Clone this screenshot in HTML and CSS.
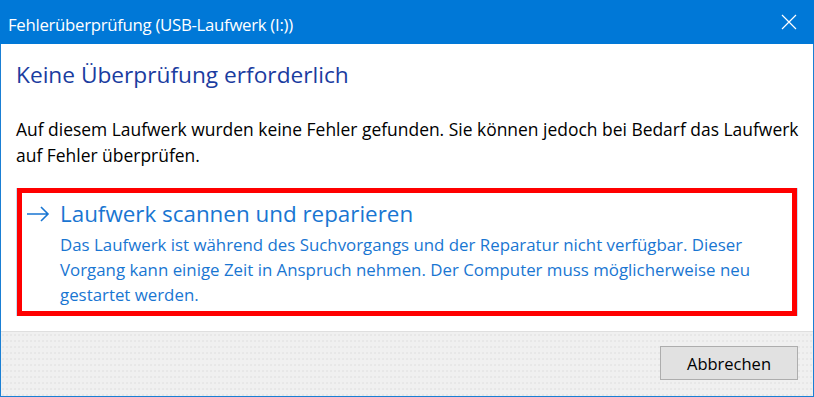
FILE: index.html
```html
<!DOCTYPE html>
<html lang="de">
<head>
<meta charset="utf-8">
<link rel="stylesheet" href="styles.css">
</head>
<body>
<div class="window">
  <div class="titlebar">
    <span class="title">Fehlerüberprüfung (USB-Laufwerk (I:))</span>
    <span class="close">
      <svg width="16" height="16" viewBox="0 0 16 16"><path d="M1 1 L15 15 M15 1 L1 15" stroke="#fff" stroke-width="1.2" fill="none"/></svg>
    </span>
  </div>
  <div class="content">
    <h1 class="instruction">Keine Überprüfung erforderlich</h1>
    <p class="text">Auf diesem Laufwerk wurden keine Fehler gefunden. Sie können jedoch bei Bedarf das Laufwerk<br>auf Fehler überprüfen.</p>
    <div class="option">
      <div class="highlight">
        <span class="arrow"><svg width="24" height="16" viewBox="0 0 24 16"><path d="M1 8 H22 M15 1 L22 8 L15 15" stroke="#1976d2" stroke-width="1.6" fill="none"/></svg></span>
        <div class="link">
          <div class="link-title">Laufwerk scannen und reparieren</div>
          <div class="link-desc">Das Laufwerk ist während des Suchvorgangs und der Reparatur nicht verfügbar. Dieser<br>Vorgang kann einige Zeit in Anspruch nehmen. Der Computer muss möglicherweise neu<br>gestartet werden.</div>
        </div>
      </div>
    </div>
  </div>
  <div class="footer">
    <span class="button">Abbrechen</span>
  </div>
</div>
</body>
</html>
```
FILE: styles.css
```css
html, body {
  margin: 0;
  padding: 0;
  background: #ffffff;
}
.window {
  width: 814px;
  height: 397px;
  box-sizing: border-box;
  border: 1px solid #1a7fd4;
  border-top: none;
  display: flex;
  flex-direction: column;
  font-family: "Open Sans", "Noto Sans", sans-serif;
}
.titlebar {
  height: 44px;
  flex: none;
  background: #0078d7;
  display: flex;
  align-items: center;
  justify-content: space-between;
  margin: 0 -1px;
  padding: 0 17px 0 8px;
}
.title {
  color: #ffffff;
  font-size: 16.8px;
  letter-spacing: -0.3px;
  padding-top: 4px;
  white-space: nowrap;
}
.close {
  display: flex;
}
.content {
  flex: 1;
  padding: 0 15px;
  display: flex;
  flex-direction: column;
  white-space: nowrap;
}
.instruction {
  margin: 16px 0 0 0;
  font-weight: normal;
  font-size: 22.7px;
  line-height: 30px;
  color: #1a3ca0;
}
.text {
  margin: 26px 0 0 0;
  font-size: 17.45px;
  line-height: 26px;
  color: #000000;
}
.option {
  margin-top: 20px;
  border-left: 1px solid #c6ddf2;
  border-right: 1px solid #c6ddf2;
}
.highlight {
  border: 5px solid #ff0000;
  display: flex;
  gap: 10px;
  padding: 6px 0 0 4px;
  height: 128px;
  box-sizing: border-box;
}
.arrow {
  display: flex;
  align-items: flex-start;
  padding-top: 7px;
}
.link {
  display: flex;
  flex-direction: column;
}
.link-title {
  font-size: 22.4px;
  line-height: 30px;
  color: #1976d2;
}
.link-desc {
  margin-top: 3px;
  font-size: 16.85px;
  line-height: 25px;
  color: #1976d2;
}
.footer {
  height: 65px;
  flex: none;
  box-sizing: border-box;
  background-color: #f0f0f0;
  background-image: radial-gradient(circle, #e2e2e2 0.6px, transparent 0.9px);
  background-size: 4px 6px;
  border-top: 1px solid #dfdfdf;
  display: flex;
  justify-content: flex-end;
  align-items: flex-start;
  padding: 14px 15px 0 0;
}
.button {
  width: 138px;
  height: 34px;
  box-sizing: border-box;
  background: #e1e1e1;
  border: 1px solid #adadad;
  display: flex;
  align-items: center;
  justify-content: center;
  font-size: 16.5px;
  color: #000000;
}
```
